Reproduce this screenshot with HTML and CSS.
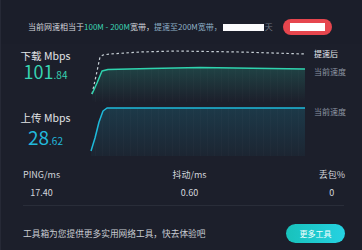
FILE: index.html
```html
<!DOCTYPE html>
<html lang="zh-CN">
<head>
<meta charset="utf-8">
<link rel="stylesheet" href="styles.css">
</head>
<body>
<div class="app">
  <header class="top">
    <p class="tip">当前网速相当于<span class="hl">100M - 200M</span>宽带，<span class="sub">提速至200M宽带，</span><span class="mask"></span><span class="faint">天</span></p>
    <button class="red-btn"><span class="mask-btn"></span></button>
  </header>

  <section class="speed">
    <div class="metrics">
      <div class="metric down">
        <div class="label">下载 Mbps</div>
        <div class="val">101<small>.84</small></div>
      </div>
      <div class="metric up">
        <div class="label">上传 Mbps</div>
        <div class="val">28<small>.62</small></div>
      </div>
    </div>
    <svg class="chart" width="274" height="120" viewBox="0 0 274 120">
      <defs>
        <linearGradient id="gDown" x1="0" y1="0" x2="0" y2="1">
          <stop offset="0" stop-color="#2fd3ae" stop-opacity="0.2"/>
          <stop offset="1" stop-color="#2fd3ae" stop-opacity="0"/>
        </linearGradient>
        <linearGradient id="gUp" x1="0" y1="0" x2="0" y2="1">
          <stop offset="0" stop-color="#1ebadb" stop-opacity="0.17"/>
          <stop offset="1" stop-color="#1ebadb" stop-opacity="0.04"/>
        </linearGradient>
        <pattern id="grid" width="7" height="4" patternUnits="userSpaceOnUse">
          <rect x="0" y="0" width="1" height="4" fill="#ffffff" fill-opacity="0.015"/>
        </pattern>
      </defs>
      <polygon points="4,50 9,39 14,27 20,25.5 62,24.5 112,23.5 217,25 217,58 4,58" fill="url(#gDown)"/>
      <polygon points="4,50 9,39 14,27 20,25.5 62,24.5 112,23.5 217,25 217,58 4,58" fill="url(#grid)"/>
      <polygon points="3,107 7,94 11,78 15,67 19,64 217,64 217,112 3,112" fill="url(#gUp)"/>
      <polygon points="3,107 7,94 11,78 15,67 19,64 217,64 217,112 3,112" fill="url(#grid)"/>
      <polyline points="4,50 8,32 12,13 15,11 22,10 52,8 87,7 152,8 217,10" fill="none" stroke="#c9d2d8" stroke-width="1.2" stroke-dasharray="2.5 2.5"/>
      <polyline points="4,50 9,39 14,27 20,25.5 62,24.5 112,23.5 217,25" fill="none" stroke="#2fd3ae" stroke-width="1.5" stroke-linejoin="round"/>
      <polyline points="3,107 7,94 11,78 15,67 19,64 217,64" fill="none" stroke="#1ebadb" stroke-width="1.5" stroke-linejoin="round"/>
      <text class="lbl-main" x="226" y="13">提速后</text>
      <text class="lbl-sub" x="226" y="30.5">当前速度</text>
      <text class="lbl-sub" x="226" y="70.5">当前速度</text>
    </svg>
  </section>

  <section class="stats">
    <div class="stat"><div class="s-label">PING/ms</div><div class="s-val">17.40</div></div>
    <div class="stat"><div class="s-label">抖动/ms</div><div class="s-val">0.60</div></div>
    <div class="stat"><div class="s-label">丢包%</div><div class="s-val">0</div></div>
  </section>
  <div class="sep"></div>

  <footer class="foot">
    <p class="foot-text">工具箱为您提供更多实用网络工具，快去体验吧</p>
    <button class="tool-btn">更多工具</button>
  </footer>
</div>
</body>
</html>
```

FILE: styles.css
```css
* { box-sizing: border-box; margin: 0; padding: 0; }
html, body { width: 362px; height: 250px; overflow: hidden; }
body {
  background: #1c1f2b;
  font-family: "Noto Sans CJK SC", "Noto Sans", sans-serif;
  color: #d8dbe0;
}
.app { width: 362px; height: 250px; border-left: 1px solid #262936; }

.top {
  height: 44px;
  padding: 10px 30px 0 27px;
  display: flex;
  align-items: center;
  background: #1b1e2a;
}
.tip { font-size: 8px; line-height: 12px; white-space: nowrap; color: #d6d9de; }
.hl { color: #3bd3b3; }
.sub { color: #8fb0c6; }
.mask {
  display: inline-block;
  width: 41px; height: 7px;
  background: #fbfbfd;
  vertical-align: -1px;
  margin-left: 1px;
  filter: blur(0.3px);
}
.faint { color: #6d7482; margin-left: 1px; }
.red-btn {
  margin-left: auto;
  width: 49px; height: 16px;
  border: none; border-radius: 8px;
  background: #e6464e;
  display: flex; align-items: center; justify-content: flex-start;
  padding-left: 7px;
}
.mask-btn { display: block; width: 35px; height: 8px; background: #fff; }

.speed { display: flex; height: 120px; }
.metrics { width: 87px; padding-left: 9px; display: flex; flex-direction: column; }
.metric { width: 71px; text-align: center; white-space: nowrap; }
.label { font-size: 10.5px; line-height: 12px; color: #e2e5e8; }
.val { font-size: 18px; line-height: 14px; }
.val small { font-size: 10px; }
.down .label { margin-top: 6px; }
.down .val { margin-top: 2px; color: #37d3b1; }
.up .label { margin-top: 30px; }
.up .val { margin-top: 6px; font-size: 19px; color: #22b9dc; }
.up .val small { font-size: 10px; }
.chart { display: block; margin-left: 0; }
.lbl-main { font-size: 8px; fill: #e8eaee; font-family: "Noto Sans CJK SC", sans-serif; }
.lbl-sub { font-size: 8px; fill: #8d96a2; font-family: "Noto Sans CJK SC", sans-serif; }

.stats {
  display: flex;
  justify-content: space-between;
  padding: 5px 17px 0 22px;
  height: 41px;
}
.stat { text-align: center; }
.s-label { font-size: 9px; line-height: 12px; color: #d3d6db; }
.s-val { font-size: 9px; line-height: 12px; margin-top: 6px; color: #d3d6db; }
.sep { height: 1px; margin: 0 18px 0 22px; background: #292d39; }

.foot {
  display: flex;
  align-items: center;
  padding: 18px 17px 0 22px;
}
.foot-text { font-size: 8.7px; line-height: 19px; color: #c9cdd3; white-space: nowrap; }
.tool-btn {
  margin-left: auto;
  width: 59px; height: 19px;
  border: none; border-radius: 10px;
  background: linear-gradient(90deg, #18c2bb, #25d2e2);
  color: #f4ffff;
  font-family: "Noto Sans CJK SC", sans-serif;
  font-size: 8px;
}
```
